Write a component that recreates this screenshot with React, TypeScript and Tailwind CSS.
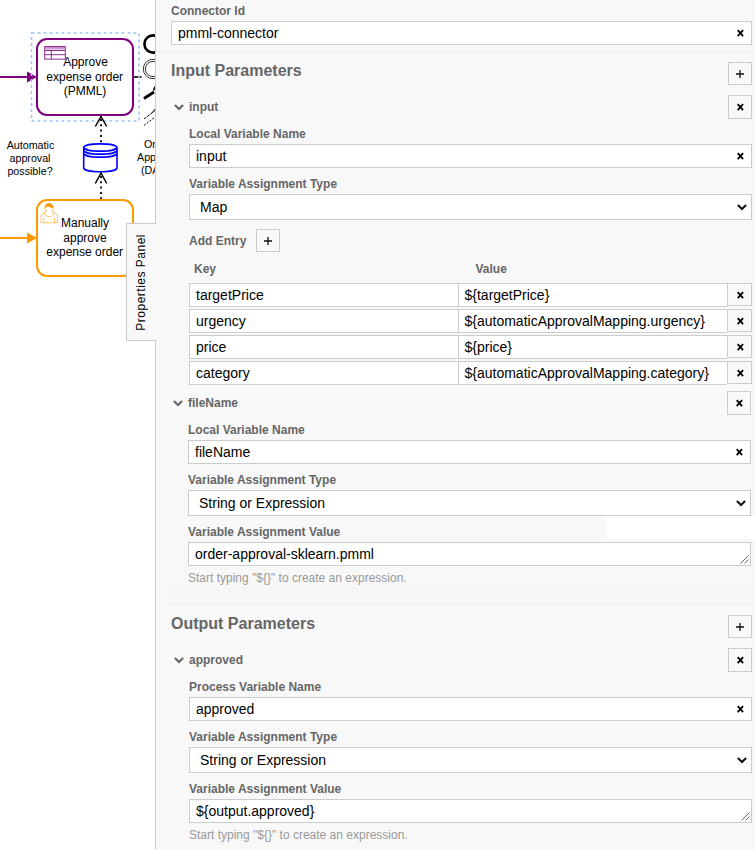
import React from "react";

const BOX = "border border-[#ccc] bg-white";

function Cross() {
  return (
    <svg width="8" height="8" viewBox="0 0 8 8" className="block">
      <path d="M1.7 1.2 L7.1 7.2 M7.1 1.2 L1.7 7.2" stroke="#000" strokeWidth="1.8" fill="none" />
    </svg>
  );
}

function Plus() {
  return (
    <svg width="8" height="8" viewBox="0 0 8 8" className="block">
      <path d="M4 0 V8 M0 4 H8" stroke="#111" strokeWidth="1.3" fill="none" />
    </svg>
  );
}

function Chevron({ color }: { color: string }) {
  return (
    <svg width="10" height="7" viewBox="0 0 10 7" className="block shrink-0">
      <path d="M0.9 1.1 L5 5 L9.1 1.1" stroke={color} strokeWidth="2.1" fill="none" />
    </svg>
  );
}

function SquareButton({ kind }: { kind: "add" | "remove" }) {
  return (
    <button
      className={`flex w-6 shrink-0 items-center justify-center border border-[#ccc] bg-[#f8f8f8] ${
        kind === "add" ? "h-[23px]" : "h-6"
      }`}
    >
      {kind === "add" ? <Plus /> : <Cross />}
    </button>
  );
}

function Label({ children }: { children: React.ReactNode }) {
  return <div className="h-4 text-xs leading-4 font-bold text-[#666]">{children}</div>;
}

function TextField({ value }: { value: string }) {
  return (
    <div className={`${BOX} mt-0.5 flex h-6 items-center justify-between pr-[7px] pl-1.5`}>
      <span>{value}</span>
      <Cross />
    </div>
  );
}

function SelectField({ value }: { value: string }) {
  return (
    <div className={`${BOX} mt-0.5 flex h-[26px] items-center justify-between pr-1 pl-2.5`}>
      <span>{value}</span>
      <Chevron color="#111" />
    </div>
  );
}

function AreaField({ value }: { value: string }) {
  return (
    <div className={`${BOX} mt-0.5 flex h-6 items-center justify-between pr-px pl-1.5`}>
      <span>{value}</span>
      <svg width="9" height="9" viewBox="0 0 9 9" className="mb-px self-end">
        <path d="M0.5 8.5 L8.5 0.5 M4.5 8.5 L8.5 4.5" stroke="#555" strokeWidth="0.9" fill="none" />
      </svg>
    </div>
  );
}

function SectionTitle({ children }: { children: React.ReactNode }) {
  return (
    <div className="flex h-[23px] justify-between">
      <h2 className="-mt-px text-base leading-5 font-bold text-[#666]">{children}</h2>
      <SquareButton kind="add" />
    </div>
  );
}

function ItemHeader({ name }: { name: string }) {
  return (
    <div className="flex h-6 items-center pl-[3px]">
      <Chevron color="#666" />
      <span className="ml-[5px] grow text-xs font-bold text-[#666]">{name}</span>
      <SquareButton kind="remove" />
    </div>
  );
}

function Help() {
  return (
    <div className="mt-1 h-4 text-xs leading-4 text-[#999]">
      Start typing "${"{}"}" to create an expression.
    </div>
  );
}

const entries = [
  ["targetPrice", "${targetPrice}"],
  ["urgency", "${automaticApprovalMapping.urgency}"],
  ["price", "${price}"],
  ["category", "${automaticApprovalMapping.category}"],
];

function Diagram() {
  return (
    <svg
      width="155"
      height="850"
      viewBox="0 0 155 850"
      className="block shrink-0 font-['Liberation_Sans',Arial,sans-serif]"
      fill="none"
    >
      {/* sequence flows */}
      <path d="M0 77H28" stroke="#800080" strokeWidth="2" />
      <path d="M27 71.5L37 77L27 82.5Z" fill="#800080" />
      <path d="M0 238H28" stroke="#ff9900" strokeWidth="2" />
      <path d="M27 232.5L37 238L27 243.5Z" fill="#ff9900" />
      <path d="M134 77H141.5" stroke="#000" strokeWidth="1.6" />

      {/* PMML task */}
      <rect x="37" y="39" width="96" height="76" rx="10" fill="#fff" stroke="#800080" strokeWidth="2" />
      <rect x="31.5" y="33" width="107.5" height="88" stroke="#9fc4f8" strokeWidth="1.6" strokeDasharray="3 3" />
      <g stroke="#8e2a8e" strokeWidth="1">
        <rect x="44.7" y="46.7" width="20.6" height="12.4" />
        <path d="M44.7 50.5H65.3M44.7 54.7H65.3M51.3 50.5V59" />
        <path d="M45 48.2H65" strokeWidth="2.6" stroke="#cf9fcf" />
        <path d="M44.7 46.7H65.3" />
      </g>
      <g fill="#000" fontSize="12" textAnchor="middle">
        <text x="85.5" y="66">Approve</text>
        <text x="84.7" y="81">expense order</text>
        <text x="85" y="95">(PMML)</text>
      </g>

      {/* data store and its associations */}
      <g stroke="#000" strokeWidth="1.5">
        <path d="M101 119V143" strokeWidth="1.8" strokeDasharray="2 3.3" />
        <path d="M95.3 126.5L101 116.5L106.7 126.5" />
        <path d="M101 176V201" strokeWidth="1.8" strokeDasharray="2 3.3" />
        <path d="M95.3 183.5L101 173L106.7 183.5" />
      </g>
      <g stroke="#0000ff" strokeWidth="1.6">
        <path d="M83.7 147.5V168C84.7 173 116 173 117 168V147.5C116 142.7 84.7 142.7 83.7 147.5C84.7 152.3 116 152.3 117 147.5" fill="#fff" />
        <path d="M83.7 150.5C84.7 155.3 116 155.3 117 150.5M83.7 153.5C84.7 158.3 116 158.3 117 153.5" />
      </g>

      {/* user task */}
      <rect x="37" y="200" width="96" height="76" rx="10" fill="#fff" stroke="#ff9900" strokeWidth="2" />
      <g transform="translate(37 199.7) scale(.98)" stroke="#ff9900" strokeWidth="0.6">
        <path d="m15,12c.909,-.845 1.594,-2.049 1.594,-3.385 0,-2.554 -1.805,-4.622 -4.357,-4.622 -2.552,0 -4.288,2.068 -4.288,4.622 0,1.348 .974,2.562 1.896,3.405 -.529,.187 -5.669,2.097 -5.794,4.756v6.718h17v-6.718c0,-2.298 -5.528,-4.595 -6.051,-4.776zm-8,6l0,5.5m11,0l0,-5" />
        <path d="m15,12m2.162,1.009c0,2.447 -2.158,4.431 -4.821,4.431 -2.665,0 -4.822,-1.981 -4.822,-4.431" />
        <path d="m15,12m-6.9,-3.8c0,0 2.251,-2.358 4.274,-1.177 2.024,1.181 4.224,1.537 4.124,.965 -.098,-.57 -.117,-3.791 -4.191,-4.136 -3.575,.001 -4.208,3.367 -4.207,4.348z" fill="#ff9900" />
      </g>
      <g fill="#000" fontSize="12" textAnchor="middle">
        <text x="85" y="227">Manually</text>
        <text x="85" y="242">approve</text>
        <text x="84.7" y="256">expense order</text>
      </g>

      {/* element captions */}
      <g fill="#000" fontSize="10.7" textAnchor="middle">
        <text x="30.5" y="149">Automatic</text>
        <text x="30" y="162">approval</text>
        <text x="30" y="175">possible?</text>
      </g>
      <g fill="#000" fontSize="10.7">
        <text x="144" y="148">Or</text>
        <text x="137" y="161">App</text>
        <text x="141" y="174">(DA</text>
      </g>

      {/* context pad */}
      <g stroke="#000">
        <circle cx="153" cy="44" r="8.6" strokeWidth="2.6" />
        <circle cx="153" cy="69" r="9.7" strokeWidth="0.8" />
        <circle cx="153" cy="69" r="7.6" strokeWidth="0.8" />
        <path d="M144 98.5L154 92" strokeWidth="2.8" />
        <path d="M153.5 90.5L155 86.5" strokeWidth="1.6" />
        <path d="M144 119L155 110.5" strokeWidth="1" strokeDasharray="3 1" />
        <path d="M144 125.5L155 117" strokeWidth="1" strokeDasharray="2 1.5" />
        <path d="M152 113L155 109" strokeWidth="0.8" />
      </g>
    </svg>
  );
}

export default function App() {
  return (
    <div className="relative flex h-[850px] w-[755px] overflow-hidden bg-white font-['Liberation_Sans',Arial,sans-serif] text-sm leading-5 text-black">
      <Diagram />
      <div className="absolute top-[223px] left-[126px] flex h-[118px] w-[30px] items-center justify-center border border-r-0 border-[#ccc] bg-[#f8f8f8] pr-0.5">
        <span className="rotate-180 text-xs leading-4 tracking-[0.5px] whitespace-nowrap [writing-mode:vertical-rl]">
          Properties Panel
        </span>
      </div>

      <aside className="flex w-[600px] shrink-0 flex-col border-l border-[#ccc] bg-[#f8f8f8]">
        <section className="h-[51px] pt-[3px] pr-[3px] pl-[15px]">
          <Label>Connector Id</Label>
          <TextField value="pmml-connector" />
        </section>

        <section className="h-[536px] border-t border-[#eee] pt-2.5 pr-[3px] pl-[15px]">
          <SectionTitle>Input Parameters</SectionTitle>
          <div className="mt-2.5">
            <ItemHeader name="input" />
            <div className="pt-[7px] pl-[18px]">
              <Label>Local Variable Name</Label>
              <TextField value="input" />
              <div className="h-2" />
              <Label>Variable Assignment Type</Label>
              <SelectField value="Map" />
              <div className="mt-[9px] flex h-[23px] items-center gap-2.5">
                <Label>Add Entry</Label>
                <SquareButton kind="add" />
              </div>
              <div className="mt-[9px] mb-1.5 flex pl-[5px]">
                <div className="w-[281.5px]">
                  <Label>Key</Label>
                </div>
                <Label>Value</Label>
              </div>
              <div className="flex flex-col gap-0.5">
                {entries.map(([key, value]) => (
                  <div key={key} className="flex h-6 items-start">
                    <div className={`${BOX} flex h-6 w-[270px] items-center border-r-0 pl-1.5`}>{key}</div>
                    <div className={`${BOX} -ml-px flex h-6 w-[269px] items-center border-r-0 pl-[5.5px]`}>{value}</div>
                    <div className="flex h-[23px] w-[25px] items-center justify-center border border-[#ccc]">
                      <Cross />
                    </div>
                  </div>
                ))}
              </div>
            </div>
          </div>

          <div className="mt-1.5 mr-px -ml-px">
            <ItemHeader name="fileName" />
            <div className="pt-[7px] pl-[18px]">
              <Label>Local Variable Name</Label>
              <TextField value="fileName" />
              <div className="h-2" />
              <Label>Variable Assignment Type</Label>
              <SelectField value="String or Expression" />
              <div className="-mr-1 flex h-[23px] justify-between">
                <div className="pt-2">
                  <Label>Variable Assignment Value</Label>
                </div>
                <div className="-mr-px h-[23px] w-[150px] bg-white" />
              </div>
              <div className="h-px" />
              <AreaField value="order-approval-sklearn.pmml" />
              <Help />
            </div>
          </div>
        </section>

        <div className="ml-[11px] h-2 bg-[#f6f6f6]" />

        <section className="mt-[9px] ml-[11px] grow border-t border-[#eee] pt-2.5 pr-[3px] pl-1">
          <SectionTitle>Output Parameters</SectionTitle>
          <div className="mt-2.5">
            <ItemHeader name="approved" />
            <div className="pt-[7px] pl-[18px]">
              <Label>Process Variable Name</Label>
              <TextField value="approved" />
              <div className="h-2" />
              <Label>Variable Assignment Type</Label>
              <SelectField value="String or Expression" />
              <div className="h-2" />
              <Label>Variable Assignment Value</Label>
              <AreaField value="${output.approved}" />
              <Help />
            </div>
          </div>
        </section>
      </aside>
    </div>
  );
}
